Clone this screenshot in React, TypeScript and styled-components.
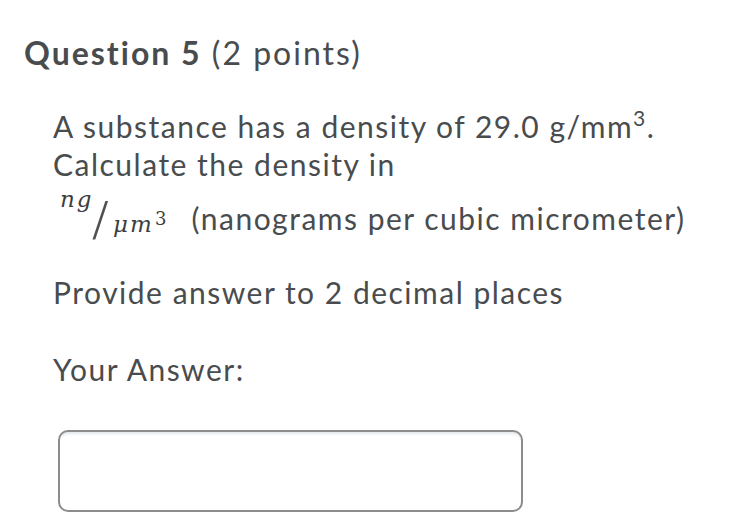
import React from "react";
import styled, { createGlobalStyle } from "styled-components";

const Global = createGlobalStyle`
  html, body { margin: 0; padding: 0; background: #ffffff; }
  body { font-family: Lato, "Open Sans", sans-serif; color: #494c4e; }
`;

const Page = styled.div`
  width: 738px;
  height: 527px;
  box-sizing: border-box;
  padding: 33px 0 0 24px;
  overflow: hidden;
`;

const Heading = styled.h2`
  margin: 0;
  font-size: 32px;
  line-height: 40px;
  letter-spacing: 2px;
  font-weight: 400;
  color: #494c4e;
`;

const Strong = styled.span`
  font-weight: 700;
`;

const Body = styled.div`
  padding: 34px 0 0 29px;
  display: flex;
  flex-direction: column;
`;

const Para = styled.p<{ $top?: number }>`
  margin: ${(p) => p.$top ?? 0}px 0 0 0;
  font-size: 30px;
  line-height: 38px;
  letter-spacing: 1.5px;
  font-weight: 400;
  white-space: nowrap;
`;

const Sup = styled.sup`
  font-size: 21px;
  line-height: 0;
  vertical-align: 12px;
`;

const MathBase = styled.span`
  font-family: "DejaVu Serif", "Liberation Serif", serif;
  color: #3e3e3e;
  line-height: 0;
  letter-spacing: 2px;
`;

const Numerator = styled(MathBase)`
  font-style: italic;
  font-size: 23px;
  vertical-align: 23px;
  margin-left: 7px;
`;

const Slash = styled(MathBase)`
  font-family: "Liberation Serif", serif;
  font-size: 56px;
  vertical-align: -9px;
  letter-spacing: 0;
  margin-left: -1px;
  color: #505050;
`;

const Denominator = styled(MathBase)`
  font-style: italic;
  font-size: 23px;
  vertical-align: -2px;
  margin-left: 5px;
`;

const Power = styled(MathBase)`
  font-size: 18px;
  vertical-align: 5px;
  letter-spacing: 0;
  margin-left: 1px;
  margin-right: 16px;
`;

const AnswerBox = styled.div`
  margin: 42px 0 0 5px;
  width: 465px;
  height: 82px;
  box-sizing: border-box;
  border: 2px solid #8c8c8c;
  border-radius: 10px;
  background: #ffffff;
  box-shadow: inset 0 4px 3px -2px #e4e7ea;
`;

export default function App() {
  return (
    <Page>
      <Global />
      <Heading>
        <Strong>Question 5</Strong> (2 points)
      </Heading>
      <Body>
        <Para>
          A substance has a density of 29.0 g/mm<Sup>3</Sup>.
        </Para>
        <Para>Calculate the density in</Para>
        <Para $top={16}>
          <Numerator>ng</Numerator>
          <Slash>/</Slash>
          <Denominator>μm</Denominator>
          <Power>3</Power> (nanograms per cubic micrometer)
        </Para>
        <Para $top={36}>Provide answer to 2 decimal places</Para>
        <Para $top={39}>Your Answer:</Para>
        <AnswerBox />
      </Body>
    </Page>
  );
}
